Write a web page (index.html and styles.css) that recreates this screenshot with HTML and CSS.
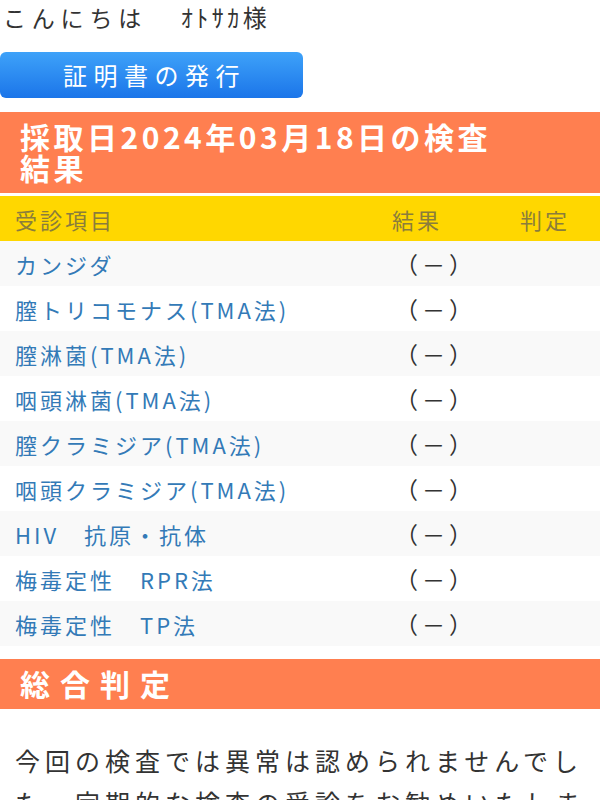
FILE: index.html
```html
<!DOCTYPE html>
<html lang="ja">
<head>
<meta charset="utf-8">
<link rel="stylesheet" href="styles.css">
</head>
<body>
<div class="greeting">こんにちは　<span class="name">ｵﾄｻｶ様</span></div>
<div class="btn">証明書の発行</div>
<h2 class="section-title result-title">採取日2024年03月18日の検査結果</h2>
<div class="table">
  <div class="row head"><div class="c1">受診項目</div><div class="c2">結果</div><div class="c3">判定</div></div>
  <div class="row odd"><div class="c1 item">カンジダ</div><div class="c2 res">（－）</div><div class="c3"></div></div>
  <div class="row"><div class="c1 item">膣トリコモナス(TMA法)</div><div class="c2 res">（－）</div><div class="c3"></div></div>
  <div class="row odd"><div class="c1 item">膣淋菌(TMA法)</div><div class="c2 res">（－）</div><div class="c3"></div></div>
  <div class="row"><div class="c1 item">咽頭淋菌(TMA法)</div><div class="c2 res">（－）</div><div class="c3"></div></div>
  <div class="row odd"><div class="c1 item">膣クラミジア(TMA法)</div><div class="c2 res">（－）</div><div class="c3"></div></div>
  <div class="row"><div class="c1 item">咽頭クラミジア(TMA法)</div><div class="c2 res">（－）</div><div class="c3"></div></div>
  <div class="row odd"><div class="c1 item">HIV　抗原・抗体</div><div class="c2 res">（－）</div><div class="c3"></div></div>
  <div class="row"><div class="c1 item">梅毒定性　RPR法</div><div class="c2 res">（－）</div><div class="c3"></div></div>
  <div class="row odd"><div class="c1 item">梅毒定性　TP法</div><div class="c2 res">（－）</div><div class="c3"></div></div>
</div>
<h2 class="section-title summary">総合判定</h2>
<p class="comment">今回の検査では異常は認められませんでした。定期的な検査の受診をお勧めいたします。</p>
</body>
</html>
```
FILE: styles.css
```css
html, body {
  margin: 0;
  padding: 0;
  background: #fff;
}
body {
  font-family: "Noto Sans CJK JP", "Noto Sans", sans-serif;
  color: #333;
}
.greeting {
  height: 34px;
  line-height: 34px;
  padding-left: 3px;
  font-size: 23px;
  letter-spacing: 5.8px;
  color: #333;
}
.greeting .name {
  margin-left: 5px;
  font-size: 24px;
  letter-spacing: 3.5px;
}
.btn {
  margin-top: 18px;
  width: 303px;
  height: 46px;
  line-height: 46px;
  box-sizing: border-box;
  border-radius: 6px;
  background: linear-gradient(#3ea2f9, #1b75e9);
  color: #fff;
  text-align: center;
  font-size: 24px;
  letter-spacing: 6.5px;
  text-indent: 6px;
}
.section-title {
  margin: 14px 0 0 0;
  background: #ff7f50;
  color: #fff;
  font-size: 30px;
  font-weight: bold;
  line-height: 31px;
  letter-spacing: 3.5px;
  padding: 9px 20px 10px 20px;
}
.result-title {
  padding-right: 100px;
}
.table {
  border-top: 3px solid #fff;
}
.row {
  display: grid;
  grid-template-columns: 392px 128px 80px;
  height: 45px;
  align-items: center;
  font-size: 22px;
  letter-spacing: 3px;
}
.row.head {
  background: #ffd700;
  color: #8a7d3c;
  height: 45px;
}
.row.odd {
  background: #f9f9f9;
}
.c1 {
  padding-left: 15px;
}
.item {
  color: #337ab7;
}
.res {
  color: #333;
  padding-left: 3px;
  letter-spacing: 4px;
  font-size: 23px;
}
.summary {
  margin-top: 13px;
  padding: 9px 20px 10px 20px;
  letter-spacing: 10px;
}
.comment {
  margin: 30px 0 0 0;
  padding: 0 15px;
  font-size: 25px;
  line-height: 42px;
  letter-spacing: 5px;
  color: #333;
}
```
